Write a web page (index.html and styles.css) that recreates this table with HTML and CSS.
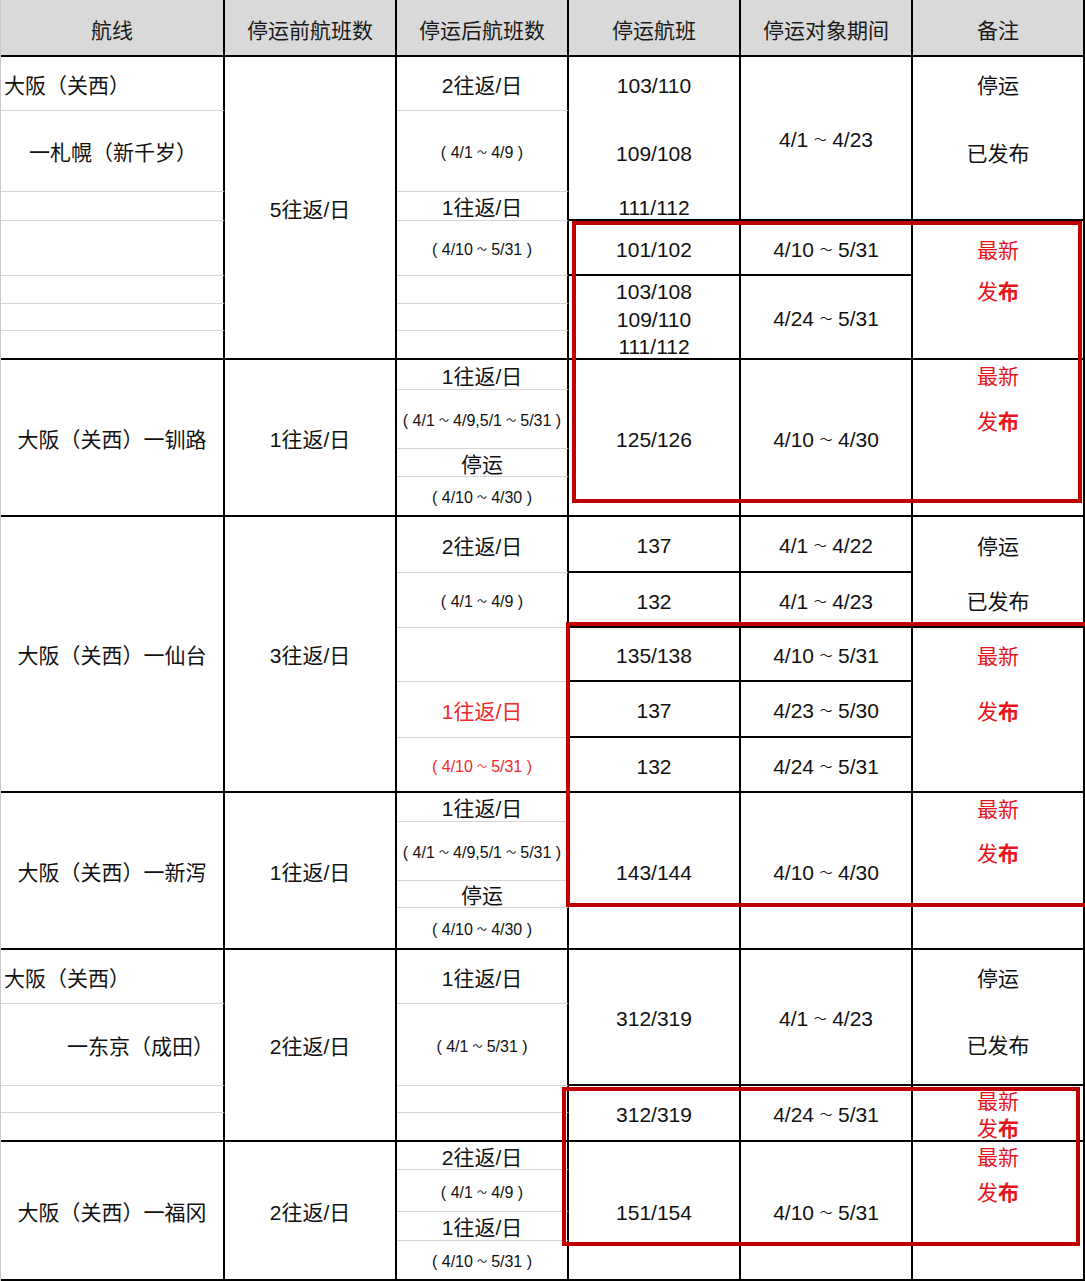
FILE: index.html
```html
<!DOCTYPE html>
<html lang="zh-CN">
<head>
<meta charset="utf-8">
<title>停运航班</title>
<link rel="stylesheet" href="styles.css">
</head>
<body>
<div class="sheet">
  <!-- header -->
  <div class="c hd bk">航线</div>
  <div class="c hd bk">停运前航班数</div>
  <div class="c hd bk">停运后航班数</div>
  <div class="c hd bk">停运航班</div>
  <div class="c hd bk">停运对象期间</div>
  <div class="c hd bk">备注</div>

  <!-- 札幌 -->
  <div class="c l">大阪（关西）</div>
  <div class="c bk s7">5往返/日</div>
  <div class="c">2往返/日</div>
  <div class="c nb">103/110</div>
  <div class="c bk s3">4/1<span class="t">～</span>4/23</div>
  <div class="c nb">停运</div>

  <div class="c ind1">一札幌（新千岁）</div>
  <div class="c sm">( 4/1<span class="t">～</span>4/9 )</div>
  <div class="c nb">109/108</div>
  <div class="c nb">已发布</div>

  <div class="c"></div>
  <div class="c">1往返/日</div>
  <div class="c bk">111/112</div>
  <div class="c bk"></div>

  <div class="c"></div>
  <div class="c sm">( 4/10<span class="t">～</span>5/31 )</div>
  <div class="c bk">101/102</div>
  <div class="c bk">4/10<span class="t">～</span>5/31</div>
  <div class="c nb new">最新</div>

  <div class="c"></div>
  <div class="c"></div>
  <div class="c nb">103/108</div>
  <div class="c bk s3">4/24<span class="t">～</span>5/31</div>
  <div class="c nb new">发<b>布</b></div>

  <div class="c"></div>
  <div class="c"></div>
  <div class="c nb">109/110</div>
  <div class="c nb"></div>

  <div class="c bk"></div>
  <div class="c bk"></div>
  <div class="c bk">111/112</div>
  <div class="c bk"></div>

  <!-- 钏路 -->
  <div class="c bk s4">大阪（关西）一钏路</div>
  <div class="c bk s4">1往返/日</div>
  <div class="c">1往返/日</div>
  <div class="c bk s4">125/126</div>
  <div class="c bk s4">4/10<span class="t">～</span>4/30</div>
  <div class="c nb new">最新</div>

  <div class="c sm">( 4/1<span class="t">～</span>4/9,5/1<span class="t">～</span>5/31 )</div>
  <div class="c nb new">发<b>布</b></div>

  <div class="c">停运</div>
  <div class="c nb"></div>

  <div class="c sm bk">( 4/10<span class="t">～</span>4/30 )</div>
  <div class="c bk"></div>

  <!-- 仙台 -->
  <div class="c bk s5">大阪（关西）一仙台</div>
  <div class="c bk s5">3往返/日</div>
  <div class="c">2往返/日</div>
  <div class="c bk">137</div>
  <div class="c bk">4/1<span class="t">～</span>4/22</div>
  <div class="c nb">停运</div>

  <div class="c sm">( 4/1<span class="t">～</span>4/9 )</div>
  <div class="c bk">132</div>
  <div class="c bk">4/1<span class="t">～</span>4/23</div>
  <div class="c bk">已发布</div>

  <div class="c"></div>
  <div class="c bk">135/138</div>
  <div class="c bk">4/10<span class="t">～</span>5/31</div>
  <div class="c nb new">最新</div>

  <div class="c red">1往返/日</div>
  <div class="c bk">137</div>
  <div class="c bk">4/23<span class="t">～</span>5/30</div>
  <div class="c nb new">发<b>布</b></div>

  <div class="c sm red bk">( 4/10<span class="t">～</span>5/31 )</div>
  <div class="c bk">132</div>
  <div class="c bk">4/24<span class="t">～</span>5/31</div>
  <div class="c bk"></div>

  <!-- 新泻 -->
  <div class="c bk s4">大阪（关西）一新泻</div>
  <div class="c bk s4">1往返/日</div>
  <div class="c">1往返/日</div>
  <div class="c bk s4">143/144</div>
  <div class="c bk s4">4/10<span class="t">～</span>4/30</div>
  <div class="c nb new">最新</div>

  <div class="c sm">( 4/1<span class="t">～</span>4/9,5/1<span class="t">～</span>5/31 )</div>
  <div class="c nb new">发<b>布</b></div>

  <div class="c">停运</div>
  <div class="c nb"></div>

  <div class="c sm bk">( 4/10<span class="t">～</span>4/30 )</div>
  <div class="c bk"></div>

  <!-- 东京 -->
  <div class="c l">大阪（关西）</div>
  <div class="c bk s4">2往返/日</div>
  <div class="c">1往返/日</div>
  <div class="c bk s2">312/319</div>
  <div class="c bk s2">4/1<span class="t">～</span>4/23</div>
  <div class="c nb">停运</div>

  <div class="c ind2">一东京（成田）</div>
  <div class="c sm">( 4/1<span class="t">～</span>5/31 )</div>
  <div class="c bk">已发布</div>

  <div class="c"></div>
  <div class="c"></div>
  <div class="c bk s2">312/319</div>
  <div class="c bk s2">4/24<span class="t">～</span>5/31</div>
  <div class="c nb new">最新</div>

  <div class="c bk"></div>
  <div class="c bk"></div>
  <div class="c bk new">发<b>布</b></div>

  <!-- 福冈 -->
  <div class="c bk s4">大阪（关西）一福冈</div>
  <div class="c bk s4">2往返/日</div>
  <div class="c">2往返/日</div>
  <div class="c bk s4">151/154</div>
  <div class="c bk s4">4/10<span class="t">～</span>5/31</div>
  <div class="c nb new">最新</div>

  <div class="c sm">( 4/1<span class="t">～</span>4/9 )</div>
  <div class="c nb new">发<b>布</b></div>

  <div class="c">1往返/日</div>
  <div class="c nb"></div>

  <div class="c sm bk">( 4/10<span class="t">～</span>5/31 )</div>
  <div class="c bk"></div>

  <!-- highlight boxes -->
  <div class="hl hl1"></div>
  <div class="hl hl2"></div>
  <div class="hl hl3"></div>
</div>
</body>
</html>
```

FILE: styles.css
```css
* {
  box-sizing: border-box;
}

html, body {
  margin: 0;
  padding: 0;
  background: #ffffff;
}

body {
  font-family: "Liberation Sans", "Noto Sans CJK SC", sans-serif;
  color: #111111;
  overflow: hidden;
}

.sheet {
  position: relative;
  width: 1085px;
  border-left: 1px solid #c8c8c8;
  display: grid;
  grid-template-columns: 224px repeat(5, 172px);
  grid-template-rows:
    57px 54px 81px 29px 55px 28px 27px 29px
    30px 59px 28px 40px
    56px 55px 54px 56px 55px
    29px 59px 27px 42px
    54px 82px 27px 29px
    28px 42px 29px 40px;
}

.c {
  display: flex;
  align-items: center;
  justify-content: center;
  padding-top: 4px;
  border-right: 2px solid #000000;
  border-bottom: 1px solid #d6d6d6;
  font-size: 21px;
  line-height: 1.2;
  white-space: nowrap;
  overflow: visible;
}

.hd {
  background: #d9d9d9;
  color: #1a1a1a;
  padding-top: 7px;
}

.bk {
  border-bottom: 2px solid #000000;
}

.nb {
  border-bottom: 0;
}

.s2 { grid-row: span 2; }
.s3 { grid-row: span 3; }
.s4 { grid-row: span 4; }
.s5 { grid-row: span 5; }
.s7 { grid-row: span 7; }

.l {
  justify-content: flex-start;
  padding-left: 3px;
}

.ind1 {
  justify-content: flex-start;
  padding-left: 28px;
}

.ind2 {
  justify-content: flex-start;
  padding-left: 66px;
}

.sm {
  font-size: 16px;
  white-space: pre;
}

.t {
  display: inline-block;
  font-size: 0.62em;
  width: 1.84em;
  text-align: center;
}

.red {
  color: #ee2a2a;
}

.new {
  color: #e8141c;
}

.new b {
  font-weight: bold;
}

.hl {
  position: absolute;
  border: 4px solid #c00000;
  pointer-events: none;
}

.hl1 {
  left: 571px;
  top: 221px;
  width: 510px;
  height: 282px;
}

.hl2 {
  left: 565px;
  top: 622px;
  width: 520px;
  height: 285px;
  border-right: 0;
}

.hl3 {
  left: 561px;
  top: 1087px;
  width: 518px;
  height: 159px;
}
```
